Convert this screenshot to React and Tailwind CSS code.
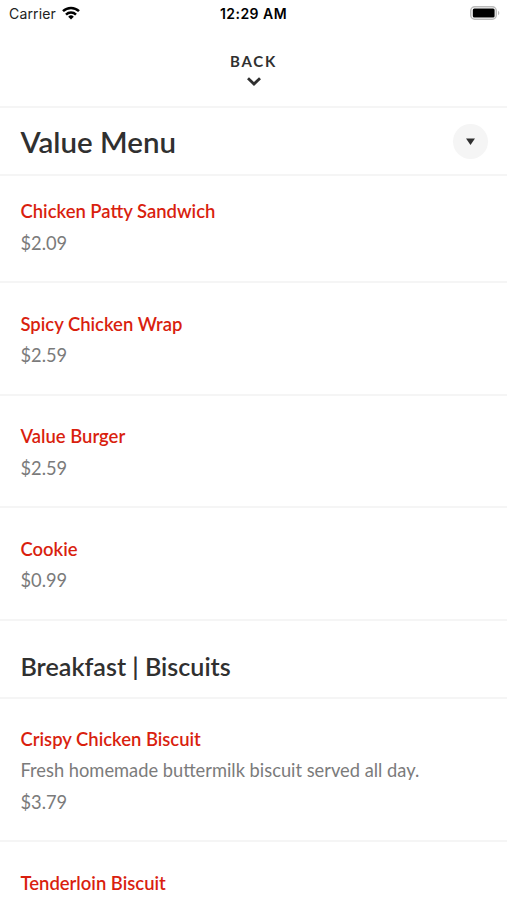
const valueMenu = [
  { name: "Chicken Patty Sandwich", price: "$2.09" },
  { name: "Spicy Chicken Wrap", price: "$2.59" },
  { name: "Value Burger", price: "$2.59" },
  { name: "Cookie", price: "$0.99" },
];

const StatusBar = () => {
  return (
    <div className="grid h-[27px] shrink-0 grid-cols-3 items-center pr-[7px] pl-[9px] font-['Inter',sans-serif] text-[14px] text-black">
      <div className="flex items-center gap-1.5">
        <span className="tracking-[0.15px] text-[#222]">Carrier</span>
        <svg className="-mt-0.5" width="18" height="14" viewBox="0 0 18 14" fill="none" stroke="currentColor" strokeWidth="2.5">
          <path d="M1 5.2a11.6 11.6 0 0 1 16 0" />
          <path d="M4 8.6a7.2 7.2 0 0 1 10 0" />
          <path d="M9 13.5 6.2 10.7a4 4 0 0 1 5.6 0Z" fill="currentColor" stroke="none" />
        </svg>
      </div>
      <span className="-ml-0.5 text-center font-semibold tracking-[0.45px] whitespace-nowrap">12:29 AM</span>
      <svg className="-mt-px justify-self-end" width="30" height="14" viewBox="0 0 30 14">
        <rect x="0.75" y="0.75" width="25.5" height="12.5" rx="4" fill="none" stroke="#bbb" strokeWidth="1.5" />
        <rect x="2.8" y="2.5" width="21.8" height="9" rx="1.5" fill="#000" />
        <path d="M28 4.8c1.8.8 1.8 3.6 0 4.4Z" fill="#bbb" />
      </svg>
    </div>
  );
};

const MenuItem = ({ name, description, price }) => {
  return (
    <li className="border-b-2 border-[#f5f5f5] px-[20.5px] pt-[25.4px] pb-[22px] text-[18.3px] leading-[31.5px]">
      <h3 className="text-[18.45px] font-semibold text-[#d91f0f]">{name}</h3>
      {description && <p className="text-[#7b7b7b]">{description}</p>}
      {price && <p className="text-[#7b7b7b]">{price}</p>}
    </li>
  );
};

export default function App() {
  return (
    <div className="flex h-[900px] w-[507px] flex-col overflow-hidden bg-white font-['Lato',sans-serif] text-[#303030]">
      <StatusBar />

      {/* Back */}
      <button className="flex h-[81px] shrink-0 flex-col items-center border-b-2 border-[#f5f5f5] pt-6">
        <span className="text-[15px] leading-5 font-bold tracking-[1.7px]">BACK</span>
        <svg className="mt-1.5" width="14" height="9" viewBox="0 0 14 9" fill="none" stroke="currentColor" strokeWidth="2.8">
          <path d="m1 1.2 6 5.8 6-5.8" />
        </svg>
      </button>

      {/* Category picker */}
      <div className="flex h-[68px] shrink-0 items-center justify-between border-b-2 border-[#f5f5f5] pr-[19px] pl-[20.5px]">
        <h1 className="pt-0.5 text-[29.5px] font-semibold">Value Menu</h1>
        <button className="flex size-[35px] items-center justify-center rounded-full bg-[#f5f5f5]">
          <svg width="9" height="7" viewBox="0 0 9 7" fill="currentColor">
            <path d="M0 0.5h9L4.5 7Z" />
          </svg>
        </button>
      </div>

      <ul className="-mt-[5px]">
        {valueMenu.map((item) => (
          <MenuItem key={item.name} {...item} />
        ))}
      </ul>

      <h2 className="h-[78px] shrink-0 border-b-2 border-[#f5f5f5] px-[20.5px] pt-[27px] text-[25.1px] leading-9 font-semibold">
        Breakfast | Biscuits
      </h2>
      <ul>
        <MenuItem
          name="Crispy Chicken Biscuit"
          description="Fresh homemade buttermilk biscuit served all day."
          price="$3.79"
        />
        <MenuItem name="Tenderloin Biscuit" />
      </ul>
    </div>
  );
}
